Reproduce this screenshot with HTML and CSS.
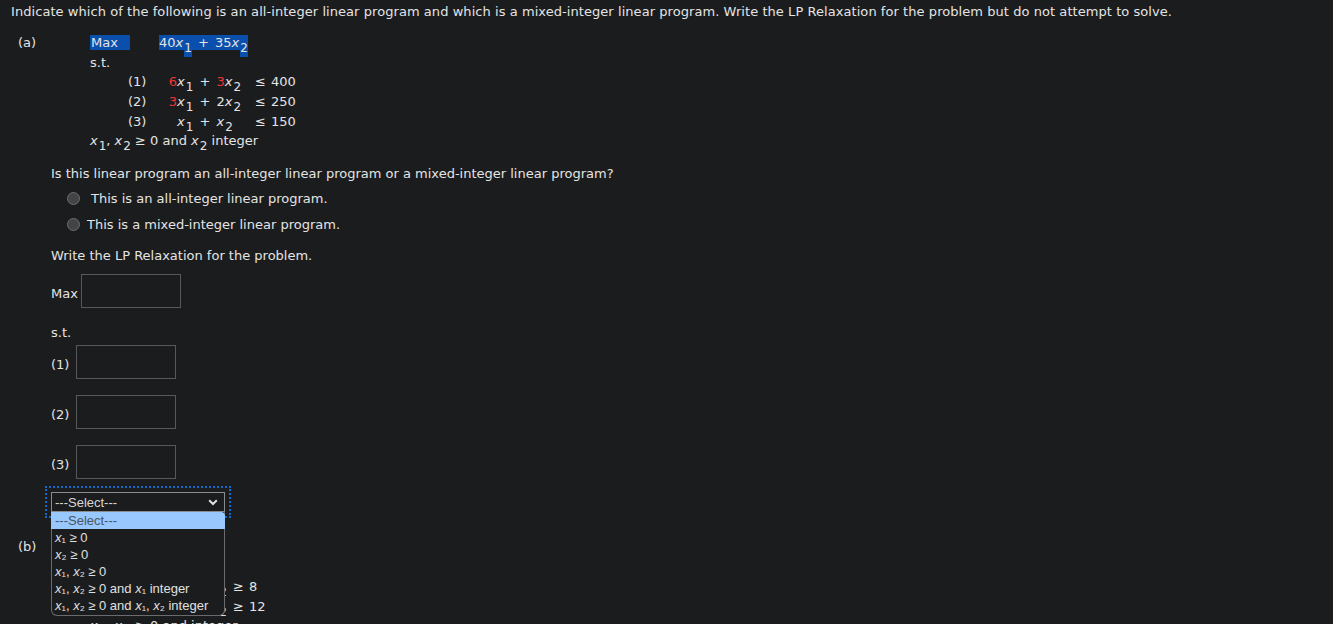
FILE: index.html
```html
<!DOCTYPE html>
<html lang="en">
<head>
<meta charset="utf-8">
<title>Integer Linear Programming</title>
<link rel="stylesheet" href="styles.css">
</head>
<body>
<div class="page">
  <p class="title">Indicate which of the following is an all-integer linear program and which is a mixed-integer linear program. Write the LP Relaxation for the problem but do not attempt to solve.</p>

  <div class="part part-a">
    <div class="plabel">(a)</div>
    <div class="pbody">
      <div class="objrow"><span class="hl obj-kw">Max</span><span class="hl obj-expr math">40<i>x</i><sub>1</sub> + 35<i>x</i><sub>2</sub></span></div>
      <div class="st">s.t.</div>
      <div class="cons">
        <div class="crow"><span class="cnum">(1)</span><span class="cexpr math"><span class="red">6</span><i>x</i><sub>1</sub> + <span class="red">3</span><i>x</i><sub>2</sub></span><span class="crel">≤</span><span class="crhs">400</span></div>
        <div class="crow"><span class="cnum">(2)</span><span class="cexpr math"><span class="red">3</span><i>x</i><sub>1</sub> + 2<i>x</i><sub>2</sub></span><span class="crel">≤</span><span class="crhs">250</span></div>
        <div class="crow"><span class="cnum">(3)</span><span class="cexpr math"><i>x</i><sub>1</sub> + <i>x</i><sub>2</sub></span><span class="crel">≤</span><span class="crhs">150</span></div>
      </div>
      <div class="nonneg"><i>x</i><sub>1</sub>, <i>x</i><sub>2</sub> ≥ 0 and <i>x</i><sub>2</sub> integer</div>
    </div>
  </div>

  <div class="block">
    <p class="question">Is this linear program an all-integer linear program or a mixed-integer linear program?</p>
    <label class="radio-row r1"><input type="radio" name="kind" class="radio"><span>This is an all-integer linear program.</span></label>
    <label class="radio-row r2"><input type="radio" name="kind" class="radio"><span>This is a mixed-integer linear program.</span></label>

    <p class="write">Write the LP Relaxation for the problem.</p>

    <div class="field-row max-row"><span class="flabel">Max</span><input type="text" class="box max-box"></div>
    <div class="st2">s.t.</div>
    <div class="field-row c-row first"><span class="flabel">(1)</span><input type="text" class="box"></div>
    <div class="field-row c-row"><span class="flabel">(2)</span><input type="text" class="box"></div>
    <div class="field-row c-row"><span class="flabel">(3)</span><input type="text" class="box"></div>

    <div class="select-wrap">
      <div class="select">
        <span class="select-text">---Select---</span>
        <svg class="chev" width="10" height="7" viewBox="0 0 10 7"><path d="M1.2 1.2 L5 5 L8.8 1.2" fill="none" stroke="#e0e0e0" stroke-width="2"/></svg>
      </div>
      <div class="dropdown">
        <div class="opt active">---Select---</div>
        <div class="opt"><i>x</i>₁ ≥ 0</div>
        <div class="opt"><i>x</i>₂ ≥ 0</div>
        <div class="opt"><i>x</i>₁, <i>x</i>₂ ≥ 0</div>
        <div class="opt"><i>x</i>₁, <i>x</i>₂ ≥ 0 and <i>x</i>₁ integer</div>
        <div class="opt"><i>x</i>₁, <i>x</i>₂ ≥ 0 and <i>x</i>₁, <i>x</i>₂ integer</div>
      </div>
    </div>
  </div>

  <div class="part part-b">
    <div class="plabel">(b)</div>
    <div class="pbody">
      <div class="objrow"><span class="obj-kw">Min</span><span class="obj-expr math">2<i>x</i><sub>1</sub> + 3<i>x</i><sub>2</sub></span></div>
      <div class="st">s.t.</div>
      <div class="cons">
        <div class="crow"><span class="cnum">(1)</span><span class="cexpr math"><i>x</i><sub>1</sub> + <i>x</i><sub>2</sub></span><span class="crel">≥</span><span class="crhs">8</span></div>
        <div class="crow"><span class="cnum">(2)</span><span class="cexpr math"><i>x</i><sub>1</sub> + <i>x</i><sub>2</sub></span><span class="crel">≥</span><span class="crhs">12</span></div>
      </div>
      <div class="nonneg"><i>x</i><sub>1</sub>, <i>x</i><sub>2</sub> ≥ 0 and integer</div>
    </div>
  </div>
</div>
</body>
</html>
```

FILE: styles.css
```css
html, body {
  margin: 0;
  height: 624px;
  overflow: hidden;
}
body {
  background: #1b1c1e;
  color: #e4e4e4;
  font-family: "DejaVu Sans", Verdana, sans-serif;
  font-size: 13px;
  line-height: 15px;
}
p { margin: 0; }
.page {
  padding: 4px 11px 0;
}
.title {
  white-space: nowrap;
  letter-spacing: 0.06px;
}

i { font-style: italic; }
sub {
  font-size: 12px;
  line-height: 0;
  vertical-align: -5px;
  margin-left: 1px;
}
.math { word-spacing: 2px; }
.red { color: #f03434; }

.part {
  display: flex;
  padding-left: 7px;
}
.part-a { margin-top: 16px; }
.plabel { width: 72px; flex: none; }
.pbody { flex: none; }

.objrow { height: 15px; white-space: nowrap; }
.obj-kw {
  display: inline-block;
  width: 39px;
  padding-left: 1px;
  margin-right: 29px;
}
.hl { background: #0b4fac; }
.hl sub { background: #0b4fac; padding-bottom: 2px; }

.st { margin-top: 5px; }
.cons { margin-left: 38px; margin-top: 2px; }
.crow {
  display: flex;
  height: 20px;
  line-height: 20px;
  white-space: nowrap;
}
.cnum { width: 40px; }
.cexpr { width: 74px; text-align: center; }
.crel { margin-left: 13px; width: 16px; }
.nonneg { margin-top: 1px; white-space: nowrap; }

.block { padding-left: 40px; }
.question { margin-top: 18px; }
.radio-row {
  display: flex;
  align-items: center;
  height: 26px;
  padding-left: 16px;
}
.radio-row.r1 { margin-top: 4px; }
.radio {
  appearance: none;
  -webkit-appearance: none;
  margin: 0;
  width: 13px;
  height: 13px;
  border-radius: 50%;
  background: #434446;
  border: 1px solid #6c6d6f;
  box-sizing: border-box;
}
.r1 span { margin-left: 11px; }
.r2 span { margin-left: 7px; }
.write { margin-top: 11px; }

.field-row {
  display: flex;
  align-items: center;
}
.flabel { padding-top: 4px; }
.box {
  box-sizing: border-box;
  width: 100px;
  height: 34px;
  margin: 0;
  background: transparent;
  border: 1px solid #56585a;
  color: #e4e4e4;
}
.max-row { margin-top: 11px; }
.max-box { margin-left: 3px; }
.c-row .box { margin-left: 7px; }
.st2 { margin-top: 17px; }
.c-row { margin-top: 16px; }
.c-row.first { margin-top: 5px; }

.select-wrap {
  position: relative;
  width: 174px;
  margin-top: 13px;
}
.select {
  box-sizing: border-box;
  height: 20px;
  border: 1px solid #8a8b8c;
  outline: 2px dotted #1668c8;
  outline-offset: 4px;
  display: flex;
  align-items: center;
  justify-content: space-between;
  padding: 0 6px 0 3px;
  font-family: "Liberation Sans", Arial, sans-serif;
  color: #d6d6d6;
}
.dropdown {
  position: absolute;
  top: 20px;
  left: 0;
  width: 174px;
  box-sizing: border-box;
  background: #1b1c1e;
  border: 1px solid #6a6b6c;
  border-top: none;
  border-radius: 0 0 6px 6px;
  font-family: "Liberation Sans", Arial, sans-serif;
  font-size: 13px;
  color: #e0e0e0;
  padding-bottom: 1px;
  z-index: 2;
}
.opt {
  height: 17px;
  line-height: 17px;
  padding-left: 3px;
  white-space: nowrap;
}
.opt.active {
  background: #99c8ff;
  color: #4b5563;
  border-radius: 0 4px 0 0;
  margin: 0 -1px;
  padding-left: 4px;
}

.part-b { margin-top: 27px; }
.part-b .obj-kw { margin-right: 10px; }
.part-b .cexpr { width: 59px; text-align: right; }
.part-b .crel { margin-left: 6px; }
.part-b .cons { margin-top: 3px; }
```
